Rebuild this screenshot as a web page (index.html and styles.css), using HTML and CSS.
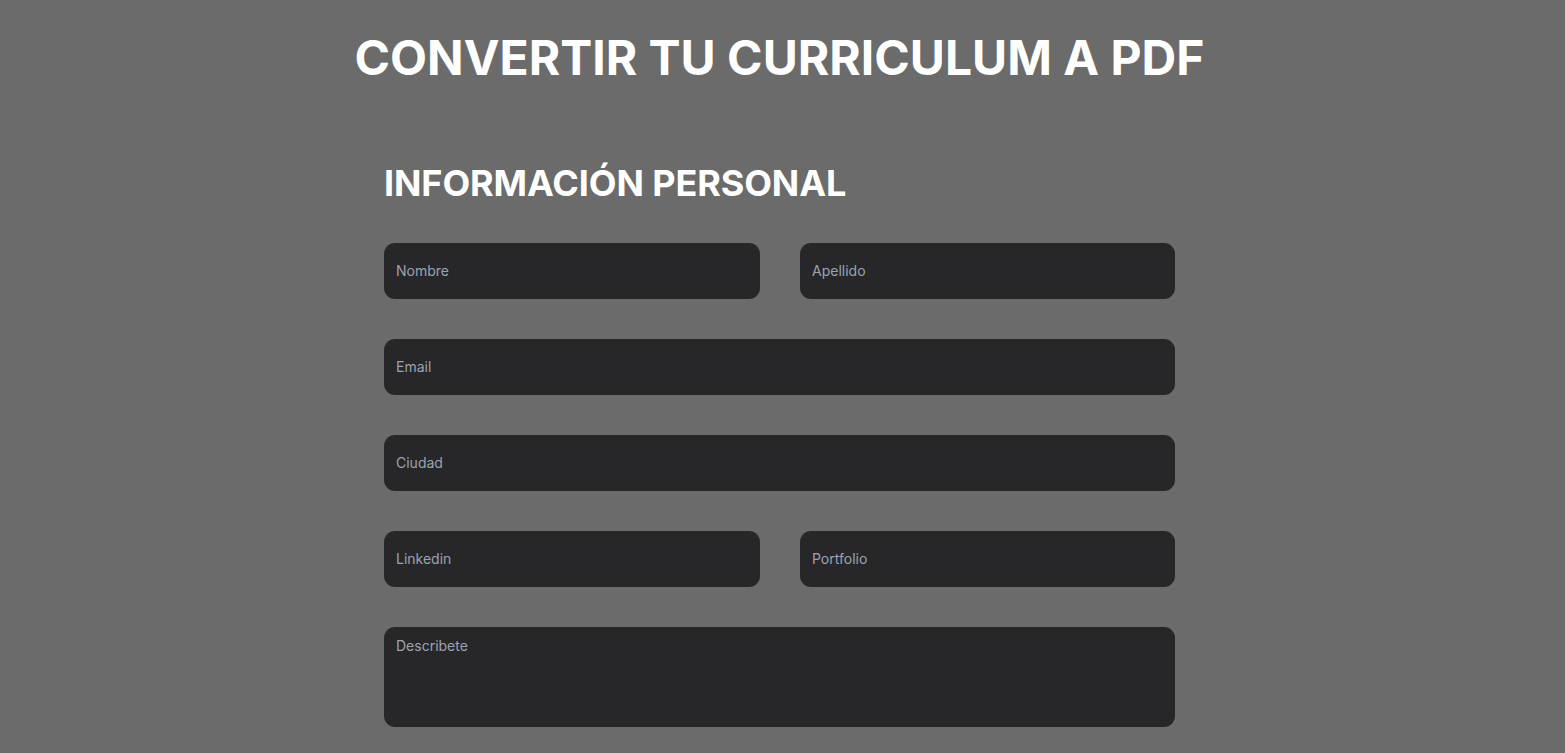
FILE: index.html
```html
<!DOCTYPE html>
<html lang="es">
<head>
<meta charset="utf-8">
<title>Convertir tu curriculum a PDF</title>
<link rel="stylesheet" href="styles.css">
</head>
<body>
<div class="page">
  <h1 class="title">CONVERTIR TU CURRICULUM A PDF</h1>
  <form class="form">
    <h2 class="section-title">INFORMACIÓN PERSONAL</h2>
    <div class="grid">
      <input class="field" type="text" placeholder="Nombre">
      <input class="field" type="text" placeholder="Apellido">
      <input class="field full" type="email" placeholder="Email">
      <input class="field full" type="text" placeholder="Ciudad">
      <input class="field" type="text" placeholder="Linkedin">
      <input class="field" type="text" placeholder="Portfolio">
      <textarea class="field full area" placeholder="Describete"></textarea>
    </div>
  </form>
</div>
</body>
</html>
```
FILE: styles.css
```css
* { box-sizing: border-box; }
html, body {
  margin: 0;
  background: #6b6b6b;
  font-family: Inter, "Noto Sans", sans-serif;
  color: #fff;
}
.page {
  display: flex;
  flex-direction: column;
  align-items: center;
  padding: 34px 6px 40px 0;
}
.title {
  margin: 0;
  font-size: 48px;
  line-height: 48px;
  font-weight: 700;
  text-align: center;
}
.form {
  width: 791px;
  margin-top: 81px;
}
.section-title {
  margin: 0 0 40px;
  font-size: 36px;
  line-height: 40px;
  font-weight: 700;
  letter-spacing: -0.1px;
}
.grid {
  display: grid;
  grid-template-columns: 376px 375px;
  column-gap: 40px;
  row-gap: 40px;
}
.field {
  display: block;
  width: 100%;
  height: 56px;
  border: none;
  border-radius: 11px;
  background: #27272a;
  color: #fff;
  font-family: Inter, "Noto Sans", sans-serif;
  font-size: 14px;
  line-height: 20px;
  padding: 8px 12px 10px;
  outline: none;
}
.field::placeholder { color: #9ca3af; }
.full { grid-column: 1 / -1; }
.area {
  height: 100px;
  padding: 9px 12px 8px;
  resize: none;
}
```
